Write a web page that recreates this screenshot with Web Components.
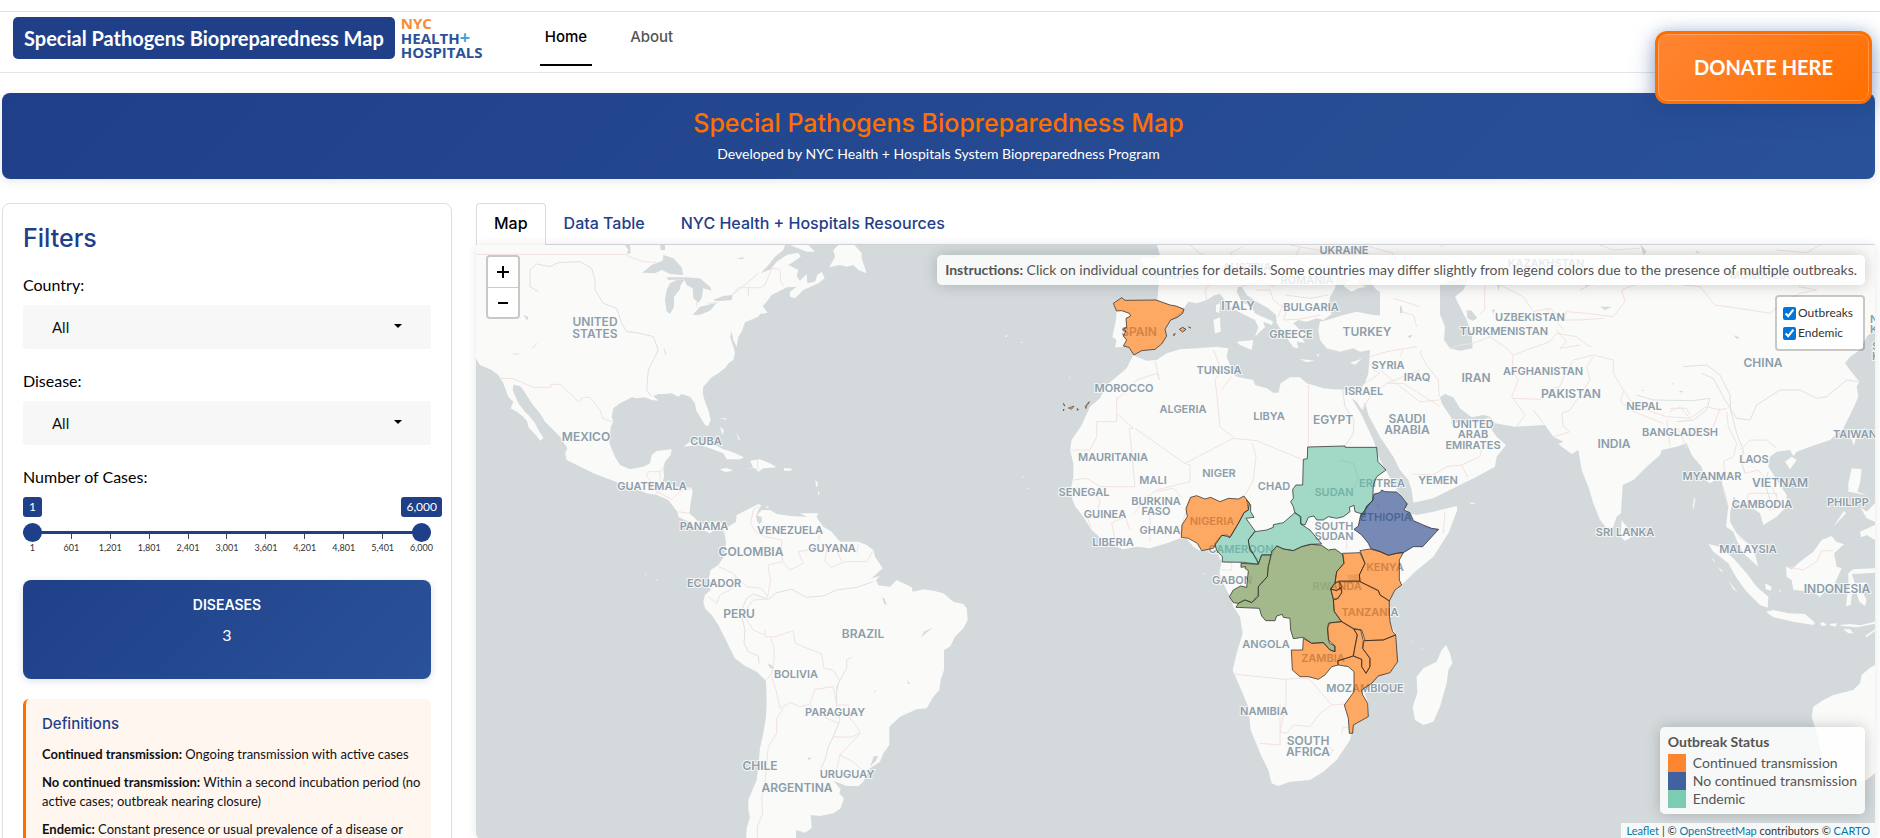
<!DOCTYPE html>
<html lang="en">
<head>
<meta charset="utf-8">
<title>Special Pathogens Biopreparedness Map</title>
<style>
  html { scrollbar-width: none; }
  body {
    margin: 0; background: #fff; color: #111;
    font: 16px/24px Lato, sans-serif;
    --navy: #1f4089; --navy-2: #2a5298; --orange: #ff6f00;
    --display: Inter, sans-serif;
  }
</style>
</head>
<body>
<pathogen-app></pathogen-app>

<template id="t-app">
  <style>
    :host { display: block; padding: 11px 5px 0 0; }
    .body { display: grid; grid-template-columns: 450px minmax(0, 1fr); gap: 24px; align-items: start; padding: 24px 0 0 2px; }
    site-hero { margin: 20px 0 0 2px; }
    site-header { margin-right: -5px; }
  </style>
  <site-header></site-header>
  <site-hero>
    <span slot="title">Special Pathogens Biopreparedness Map</span>
    Developed by NYC Health + Hospitals System Biopreparedness Program
  </site-hero>
  <div class="body">
    <filter-panel></filter-panel>
    <main>
      <tab-bar></tab-bar>
      <outbreak-map></outbreak-map>
    </main>
  </div>
</template>

<template id="t-header">
  <style>
    :host { display: flex; align-items: flex-start; position: relative; height: 60px; border-top: 1px solid #dee2e3; border-bottom: 1px solid #e4e6e8; padding-left: 13px; }
    .brand { background: var(--navy); color: #fff; font-size: 20px; font-weight: 700; line-height: 42px; padding: 0 11px; border-radius: 5px; margin-top: 5px; text-decoration: none; white-space: nowrap; }
    .logo { margin: 4px 0 0 6px; width: 85px; font: 700 15px/14px "Open Sans", sans-serif; color: var(--navy-2); }
    .logo div { white-space: nowrap; }
    .nyc { color: #f68b33; }
    .plus { color: #4aa0d8; font-size: 18px; line-height: 14px; }
    nav { display: flex; gap: 33px; margin-left: 54px; }
    nav a { font: 500 15px/24px var(--display); color: #555; text-decoration: none; padding: 13px 5px 15px; border-bottom: 2px solid transparent; }
    nav a.on { color: #000; border-color: #000; }
    .donate { position: absolute; right: 8px; top: 19px; width: 217px; height: 73px; box-sizing: border-box; border: 3px solid var(--orange); border-radius: 12px;
      background: linear-gradient(135deg, #ff8534, #ff6f00); color: #fff; font: 700 20px/24px Lato, sans-serif; padding: 0 0 2px; cursor: pointer; z-index: 2;
      box-shadow: 0 8px 25px rgba(31,64,137,.4), 0 0 14px rgba(31,64,137,.2), inset 0 0 0 1px rgba(255,255,255,.25); }
  </style>
  <a class="brand" href="#">Special Pathogens Biopreparedness Map</a>
  <div class="logo"><div class="nyc">NYC</div><div>HEALTH<span class="plus">+</span></div><div>HOSPITALS</div></div>
  <nav><a class="on" href="#home">Home</a><a href="#about">About</a></nav>
  <button class="donate" type="button">DONATE HERE</button>
</template>

<template id="t-hero">
  <style>
    :host { display: block; background: linear-gradient(135deg, var(--navy), var(--navy-2)); color: #fff; border-radius: 8px; text-align: center; padding: 14px 0 15px; box-shadow: 0 2px 10px rgba(0,0,0,.1); font-size: 14px; line-height: 20px; }
    h1 { margin: 0 0 5px; font: 500 25px/32px var(--display); color: var(--orange); }
  </style>
  <h1><slot name="title"></slot></h1>
  <slot></slot>
</template>

<template id="t-filters">
  <style>
    :host { display: block; box-sizing: border-box; border: 1px solid #dedede; border-radius: 8px; padding: 19px 20px 20px; background: #fff; }
    h2 { margin: 0 0 20px; font: 500 25px/30px var(--display); color: var(--navy); }
    .card { background: linear-gradient(135deg, var(--navy), var(--navy-2)); color: #fff; border-radius: 8px; text-align: center; height: 99px; box-sizing: border-box; padding-top: 13px; box-shadow: 0 2px 8px rgba(0,0,0,.12); }
    .card h3 { margin: 0 0 6px; font: 600 14px/24px var(--display); }
    .defs { margin: 20px 0 0; background: #fff6f0; border-left: 3px solid var(--orange); border-radius: 6px; padding: 13px 2px 20px 16px; font-size: 13px; line-height: 19px; color: #111; }
    .defs h3 { margin: 0 0 9px; font: 500 15px/24px var(--display); color: var(--navy); }
    .defs p { margin: 0 0 9px; }
  </style>
  <h2>Filters</h2>
  <select-field label="Country:"></select-field>
  <select-field label="Disease:"></select-field>
  <case-slider></case-slider>
  <div class="card"><h3>DISEASES</h3>3</div>
  <section class="defs">
    <h3>Definitions</h3>
    <p><b>Continued transmission:</b> Ongoing transmission with active cases</p>
    <p><b>No continued transmission:</b> Within a second incubation period (no active cases; outbreak nearing closure)</p>
    <p><b>Endemic:</b> Constant presence or usual prevalence of a disease or</p>
  </section>
</template>

<template id="t-select">
  <style>
    :host { display: block; margin-bottom: 20px; }
    label { display: block; line-height: 24px; margin-bottom: 8px; color: #000; }
    .box { position: relative; }
    select { appearance: none; display: block; width: 100%; height: 44px; border: 0; border-radius: 3px; background: #f7f7f7; padding: 0 29px; font: 15px/24px Lato, sans-serif; color: #111; }
    svg { position: absolute; right: 29px; top: 19px; pointer-events: none; }
  </style>
  <label for="s"></label>
  <div class="box"><select id="s"><option>All</option></select><svg width="8" height="4"><path d="M0 0H8L4 4Z"/></svg></div>
</template>

<template id="t-slider">
  <style>
    :host { display: block; margin-bottom: 26px; }
    label.title { display: block; line-height: 24px; margin-bottom: 8px; color: #000; }
    .vals { display: flex; justify-content: space-between; margin-right: -11px; }
    output { background: var(--navy); color: #fff; border-radius: 3px; font-size: 12px; line-height: 20px; padding: 0 5px; min-width: 9px; text-align: center; }
    .track { position: relative; height: 19px; margin-top: 6px; background: linear-gradient(var(--navy), var(--navy)) center / 100% 3px no-repeat; }
    input { appearance: none; position: absolute; inset: 0; width: 100%; height: 19px; margin: 0; background: none; pointer-events: none; }
    input::-webkit-slider-thumb { appearance: none; width: 19px; height: 19px; border-radius: 50%; background: var(--navy); pointer-events: auto; }
    .ticks { display: grid; grid-template-columns: repeat(11, minmax(0, 1fr)); margin: -8px -10px 0; text-align: center; font-size: 9px; line-height: 12px; color: #333; }
    .ticks span::before { content: ""; display: block; width: 1px; height: 5px; margin: 0 auto 3px; background: #444; }
    .ticks span:first-child::before, .ticks span:last-child::before { background: none; }
  </style>
  <label class="title" for="lo">Number of Cases:</label>
  <div class="vals"><output for="lo">1</output><output for="hi">6,000</output></div>
  <div class="track"><input id="lo" type="range" min="1" max="6000" value="1"><input id="hi" type="range" min="1" max="6000" value="6000" aria-label="Maximum number of cases"></div>
  <div class="ticks"><span>1</span><span>601</span><span>1,201</span><span>1,801</span><span>2,401</span><span>3,001</span><span>3,601</span><span>4,201</span><span>4,801</span><span>5,401</span><span>6,000</span></div>
</template>

<template id="t-tabs">
  <style>
    :host { display: flex; border-bottom: 1px solid #d8dce2; height: 41px; }
    a { font: 500 16px/24px var(--display); color: var(--navy); text-decoration: none; padding: 7px 17px 9px; border: 1px solid transparent; border-radius: 4px 4px 0 0; height: 24px; border-bottom: 0; }
    a.on { color: #000; background: #fff; border-color: #d8dce2; padding-bottom: 10px; }
  </style>
  <a class="on" href="#map">Map</a><a href="#table">Data Table</a><a href="#resources">NYC Health + Hospitals Resources</a>
</template>

<template id="t-map">
  <style>
    :host { display: block; position: relative; height: 594px; border-radius: 0 0 6px 6px; overflow: hidden; background: #d4dadc; box-shadow: 0 0 10px rgba(0,0,0,.1); font-size: 12px; }
    svg.world { display: block; width: 100%; height: 100%; }
    .land { fill: #fafaf8; }
    .water { fill: #d4dadc; }
    .bd { fill: none; stroke: #f2e1e1; stroke-width: 3; stroke-linejoin: round; }
    .rv { fill: none; stroke: #dce2e3; stroke-width: 3; stroke-linejoin: round; }
    .hot path { stroke: #222; stroke-opacity: .7; stroke-width: 3; stroke-linejoin: round; fill-opacity: .6; }
    .c { fill: #ff7100; } .n { fill: #1f4089; } .e { fill: #66c2a5; }
    .hot .m { fill: #91ab76; fill-opacity: .84; }
    .hot .islet { stroke-width: 2; }
    text { font: 600 11px Inter, sans-serif; fill: #8c9dab; stroke: #fafaf8; stroke-width: 2px; stroke-opacity: .85; paint-order: stroke; text-anchor: middle; }
    text.l { font-size: 12px; }
    text.s { text-anchor: start; }
    .panel { background: rgba(255,255,255,.8); border-radius: 5px; box-shadow: 0 0 15px rgba(0,0,0,.2); color: #555; }
    .zoom, .layers { border: 2px solid rgba(0,0,0,.2); border-radius: 4px; background: #fff; background-clip: padding-box; }
    .zoom { position: absolute; left: 10px; top: 10px; width: 30px; }
    .zoom button { display: grid; place-items: center; width: 30px; height: 30px; border: 0; padding: 0; background: none; cursor: pointer; }
    .zoom button + button { border-top: 1px solid #ccc; }
    .help { position: absolute; right: 10px; top: 10px; font-size: 14px; line-height: 18px; padding: 6px 8px; }
    .layers { position: absolute; right: 10px; top: 50px; padding: 6px 10px 6px 6px; color: #333; }
    .layers label { display: flex; align-items: center; gap: 2px; line-height: 20px; }
    .layers input { width: 13px; height: 13px; margin: 0; accent-color: #0075db; }
    .legend { position: absolute; right: 10px; bottom: 25px; padding: 6px 8px; font-size: 14px; line-height: 18px; }
    .legend div { display: flex; gap: 7px; }
    .legend i { width: 18px; height: 18px; opacity: .88; }
    .legend b { display: block; margin-bottom: 3px; }
    .c-bg { background: #ff7412; } .n-bg { background: #284c92; } .e-bg { background: #6bc4a8; }
    .credit { position: absolute; right: 0; bottom: 0; background: rgba(255,255,255,.8); font-size: 11px; line-height: 16px; padding: 0 5px; color: #333; }
    .credit a { color: #0078a8; text-decoration: none; }
  </style>
  <svg class="world" viewBox="476 245 1399 594" preserveAspectRatio="xMidYMid slice">
    <!-- North and Central America -->
    <g transform="translate(470 190) scale(.33333)">
      <path class="land" d="M18 150H950L940 180 915 200 895 225 872 250 902 238 920 215 950 195 985 188 992 200 970 215 955 225 985 240 980 258 990 272 1010 252 1012 280 1035 275 1042 255 1055 245 1064 265 1045 280 1000 300 975 325 960 320 960 305 980 290 950 292 935 300 905 315 890 335 878 348 893 368 870 372 865 380 825 397 822 405 815 425 805 440 800 470 790 450 785 425 780 440 790 470 795 490 790 510 775 520 765 535 745 550 725 562 700 590 698 610 705 635 715 660 722 690 715 708 705 705 690 680 678 660 675 640 660 620 635 612 625 620 605 610 585 612 565 612 550 618 565 632 545 630 525 622 500 625 485 622 465 632 450 640 430 655 425 680 430 695 422 710 418 760 435 800 450 825 480 838 520 830 540 820 545 795 560 783 605 778 602 795 585 815 580 835 582 860 578 875 620 890 665 893 668 905 662 935 658 970 680 990 700 1002 740 995 760 1000 778 1010 765 1035 755 1015 735 1018 720 1030 705 1022 680 1012 655 995 625 980 622 965 595 930 560 915 530 910 490 895 450 880 410 865 370 850 340 835 290 810 285 790 292 775 270 740 245 715 225 695 210 670 185 640 160 600 150 588 130 584 128 600 145 640 165 665 180 680 195 700 205 720 215 735 220 745 210 752 200 738 185 722 175 712 172 695 160 680 140 665 122 655 130 635 115 620 100 580 85 555 65 540 30 525 18 505ZM1078 232 1095 200 1090 180 1105 165 1100 150H1140L1175 190 1175 205 1190 250 1165 240 1150 225 1130 230 1110 225ZM1000 150 1035 185 1010 185 960 165ZM640 770 660 755 700 758 735 765 760 778 785 785 822 802 810 808 770 808 760 790 720 775 690 765 655 768ZM818 835 850 833 840 812 870 808 900 820 920 832 880 835 865 845 855 835ZM750 838 770 834 790 842 765 846ZM942 834 968 836 962 842 942 842ZM750 710 762 720 757 735ZM795 720 800 732 812 750 805 748ZM745 683 770 686 768 690ZM1036 870 1042 876 1044 890 1038 888ZM1044 900 1049 912 1044 914Z"/>
      <path class="water" d="M517 248 545 225 578 212 580 195 610 205 635 232 640 255 600 252 575 240 555 250ZM590 365 585 330 590 300 600 280 620 270 645 268 632 285 630 298 612 320 612 350 600 372ZM640 262 690 265 720 290 725 302 700 295 695 325 685 338 670 325 668 295 650 285ZM668 375 690 350 740 338 720 362 690 374ZM728 330 760 318 788 315 785 330 745 334ZM465 165H480L482 190 470 192 475 180ZM570 165H585V180H572ZM160 375 175 380 172 392ZM800 205 822 202 818 208ZM590 262 640 262 640 268 595 270Z"/>
      <path class="rv" d="M205 305 180 290 180 240 200 222 240 230 265 218 330 215 365 235 375 270 375 300 400 340 440 355 455 400 470 425 500 428 550 440 565 480 535 540 530 600 545 620M582 475 588 495M185 475 202 460M130 492H148M865 250 830 280 790 312M835 320V295"/>
      <path class="bd" d="M18 193H465L490 205 520 215 560 217M680 350V330M712 340 742 338M785 315 805 293H870L885 285 905 235 930 238 932 275 942 290M88 565 130 566 190 592H242V583H270L300 610 325 635 340 622H360L390 660 398 685 430 697M583 830 570 845H535L530 860 550 880M570 845V880M555 915 570 895M665 895 630 905 605 928 560 905M625 965 658 970M862 808 864 840"/>
    </g>
    <!-- South America -->
    <g transform="translate(470 500) scale(.33333)">
      <path class="land" d="M765 105 768 130 765 165 745 195 722 210 715 240 722 270 705 285 700 305 705 325 725 345 745 375 765 415 785 455 795 475 825 498 860 515 888 542 890 600 888 650 880 700 870 745 865 800 860 840 835 900 835 930 840 950 830 985 828 1025H978V990L1005 998 1025 985 1022 945 1050 948 1090 940 1112 925 1122 895 1108 880 1112 868 1090 842 1130 858 1165 858 1180 845 1200 805 1230 785 1240 760 1258 735 1258 680 1290 650 1340 628 1370 625 1390 590 1408 570 1412 540 1422 510 1422 450 1440 440 1455 410 1480 385 1493 360 1490 325 1480 312 1450 305 1420 280 1390 272 1360 268 1328 275 1325 262 1280 240 1260 260 1225 256 1218 240 1230 228 1205 235 1238 205 1215 170 1210 150 1190 135 1165 125 1110 125 1085 95 1060 80 1045 60 1040 50 1045 40 990 40 1010 50 960 48 920 42 900 30 875 30 862 45 874 60 868 70 858 50 865 30 874 16 865 12 840 25 800 45 798 65 775 80ZM888 18 897 22 890 25ZM525 222 530 224 526 226ZM558 238 564 240 560 242Z"/>
      <path class="water" d="M860 48 875 50 876 65 868 72 860 62ZM893 490 912 500 910 508 900 503ZM1236 292 1243 295 1250 315 1243 312ZM1353 415 1362 395 1390 382 1368 398ZM1013 772 1026 775 1015 780ZM1200 800 1212 768 1224 768 1218 782ZM1210 580 1222 570 1214 574ZM1312 540 1320 552 1314 552Z"/>
      <path class="rv" d="M815 330 830 295 850 282 895 298 920 278 965 268 1010 292 1060 288 1100 270 1160 262 1210 245M815 350 825 390 822 430 835 455 865 468 867 490M1145 472 1130 480V505L1100 560V620L1110 660 1090 710 1075 740 1065 780 1052 805"/>
      <path class="bd" d="M866 20 850 30 842 70 855 95 885 110 935 120V150L938 185 895 195V210L902 240 892 295M745 200 790 220 830 260 875 265 893 290M715 290 740 310 750 285 780 270 800 250 795 225M892 297 850 300 830 325V360L850 390 885 405V390M883 410H915L970 392 975 430 1055 462 1062 505 1090 510 1108 540 1100 575M902 415 912 440V480L905 520 890 540M905 530 918 570 930 625 960 608 990 620 1020 612 1035 568 1090 560 1100 615 1135 615V650L1160 678 1170 700 1140 712 1088 710M1020 615 1040 640 1105 670M940 625 920 655V700L895 740 885 850 875 890 878 940 862 980V1014M1170 700 1110 765 1095 830M1108 765 1150 785 1175 810M938 185 960 210 1000 190 985 155 1045 145M1045 120 1055 90M1070 150 1065 185 1085 202 1125 185 1190 185 1208 155M1100 150 1115 185M1165 130 1160 160M680 60 690 80M760 85 765 100"/>
    </g>
    <!-- Asia and Oceania -->
    <g transform="translate(1400 340) scale(.33333)">
      <path class="land" d="M-60 -285V30H-90L-95 100-105 130-135 165-130 185-112 210-105 185-95 225-60 290-20 350 0 390 25 420 35 450 40 488 100 475 190 430 230 410 285 380 290 350 318 315 290 290 270 262 268 232 255 238 240 248 200 245 155 250 155 235 125 190 120 172 135 162 160 172 180 205 215 232 250 225 270 230 285 250 345 260 435 255 460 290 490 305 475 312 515 342 535 330 545 390 565 440 580 490 600 540 620 565 640 560 650 530 663 520 668 435 700 420 740 380 780 345 785 330 830 320 860 310 875 345 905 380 915 420 930 430 955 415 965 420 970 450 985 500 978 560 1000 575 1010 600 1030 640 1075 680 1070 660 1060 625 1010 580 990 545 990 520 1000 470 1025 490 1050 500 1080 520 1090 555 1130 530 1160 500 1160 465 1140 435 1105 380 1110 350 1130 335 1170 330 1180 348 1190 335 1230 320 1290 300 1330 265 1355 215 1375 170 1370 140 1378 125 1350 90 1335 70 1350 50 1380 30 1400-10 1425-35V-285Z
      M665 540 680 560 695 590 675 603 662 590ZM925 612 960 620 1000 655 1040 700 1070 740 1105 770 1103 803 1080 795 1040 755 1010 715 985 670 940 635ZM1098 815 1120 810 1165 820 1215 822 1245 848 1240 855 1180 845 1120 832ZM1260 850 1270 846 1280 856 1265 858ZM1288 852 1310 850 1308 860 1290 856ZM1320 855 1350 852 1380 856 1425 845V851L1370 862 1325 858ZM1330 868 1350 868 1360 880 1345 880ZM1395 888 1425 868V872L1400 892ZM1158 680 1175 688 1200 665 1240 635 1265 600 1295 588 1308 605 1332 613 1302 640 1310 680 1325 685 1300 740 1280 750 1260 770 1240 755 1180 750 1175 720 1160 710ZM1345 700 1360 688 1425 685V698L1355 702 1365 730 1400 727 1382 745 1400 780 1395 798 1378 785 1368 755 1355 765 1352 795 1338 798 1345 740ZM1355 385 1385 388 1380 430 1372 455 1400 465 1345 455 1345 430ZM1300 560 1332 512 1338 520ZM1380 575 1425 555V600L1400 585 1383 592ZM1380 500 1400 515 1425 490V545L1400 535ZM1350 285 1372 275 1362 318ZM1155 365 1175 350 1190 360 1170 388ZM882 473 886 478 880 508 878 500ZM1095 730 1115 740 1112 752 1098 748ZM1138 750 1144 752 1140 757ZM935 652 946 665 940 663ZM955 680 970 695 962 693ZM985 722 1012 755 1000 748ZM208 488 228 489 215 492Z
      M1425 975 1408 985 1385 1005 1380 1030 1360 1050 1300 1065 1270 1080 1240 1100 1235 1130 1250 1180 1265 1240 1275 1280V1340L1320 1345 1360 1325 1400 1320 1425 1300Z"/>
      <path class="water" d="M95-150 125-170 170-185 205-182 190-150 165-130 180-100 200-60 215-20 218 25 180 32 150 25 132 0 135-40 115-90ZM200-90 215-88 232-65 218-58 202-65ZM275-90 285-92 280-78ZM600-100 635-100 615-90ZM1000-14 1018-8 1012-2ZM725 148 732 152 726 154ZM838 152 850 154 842 158ZM0-105 10-95 8-80 0-78ZM292-165 300-180 296-145ZM560-170 562-160 556-162ZM720-290 740-265 730-255ZM885-270 900-262 892-260ZM72-10 78 10 72 15ZM815 128 822 132 817 134Z"/>
      <path class="rv" d="M850 80 920 75 960 105 990 165 992 210 1010 280 1030 330 1025 370 1035 400M905 100 940 115 975 180 1010 235 1050 240 1070 195 1140 150 1200 150 1250 175 1280 170 1340 120 1375 125M710 165 760 180 880 182 930 175 920 210 880 240 830 245M540-150 600-180 700-190 800-165M500-235 520-260M430 250 400 210M295-155 305-180 335-200 365-215M1105 395 1095 430 1110 480"/>
      <path class="bd" d="M-60-60-20-50 10-25 60-40 75 10 60 40 80 75 115 120 118 170M118 180 60 185 0 140-60 90M35 402 100 405 140 380 185 375 240 350 245 325M185 375 203 412M150 25 180 15 220 10 270-10 320 25 340 45 335 90 355 120 335 170 375 225 350 260M340 45 380 30 450 5 470-20 530-10 560 15 575 20M340 175 420 178 440 150 480 140 495 100 520 60 580 45M580 50 560 80 570 120 540 165 510 210 485 220 490 260 510 275 480 285 460 290M580 45 640 60 640 100 670 150 690 180 740 210 800 230 870 235 840 200 810 215M670 155 662 185 700 215 790 250M810 205 860 205 870 225M870 235 920 200 960 210 980 205M800 240 805 280 835 265 850 300 860 325M805 280 810 320M960 205 940 260 905 290 890 260 870 290M980 215 985 260 1010 310 1000 350 970 365 975 400M1020 330 1050 300 1100 300 1130 325M1030 380 1035 400 1075 390 1115 440 1130 470M1045 460 1130 460 1130 505 1105 510M970 440 985 500M1045 460 1040 500 1060 510M1160 680 1210 690 1250 665 1265 632H1300M1015 590 1040 610M254-170V-90L240-78M254-170 280-180 310-160 370-130 400-85 450-95 490-60 500-85 560-80 640-70 675-115 665-150M440-95 490-30M480-60 540-60 610-65M470-30 500 5 480 25 540 15M665-150 740-180M850-165 900-160 945-105 1050-90 1110-80 1140-105 1200-140 1250-150 1198-160 1205-185 1260-210M95-260 100-285 130-280M97-265 110-240 230-230M600-285 640-270 720-275M1130-270 1220-262 1260-285 1320-290M0 50 20 5-10-40-60-50"/>
    </g>
    <!-- Africa and Madagascar -->
    <g transform="translate(1000 400) scale(.33333)">
      <path class="land" d="M400-135 380-95 350-70 320-45 300-5 270 20 245 75 215 120 210 150 220 190 220 230 210 280 225 318 250 350 275 390 320 430 370 448 410 440 450 445 500 430 540 415 562 418 580 440 600 452 625 447 650 455 665 485 658 520 670 550 690 590 700 620 720 650 728 700 710 760 698 810 715 850 745 920 752 990 785 1070 805 1110 815 1150 835 1158 870 1145 930 1140 970 1115 1010 1080 1050 1020 1060 975 1105 950 1105 910 1090 870 1135 825 1170 818 1190 790 1187 705 1170 665 1165 605 1185 570 1205 555 1245 515 1300 470 1345 400 1372 330 1370 318 1300 335 1250 345 1225 340 1215 320 1220 305 1200 285 1180 250 1158 212 1140 180 1120 120 1085 45 1055-5 1070 5 1085 28 1095 0 1090-30 1000-32 970-35 920-50 900-68 870-68 842-50 835-22 820-22 800-35 765-45 760-60 710-70 685-85 690-105 680-130 685-155 650-160 590-155 540-152 500-140 470-120 440-118 410-130ZM1338 735 1350 760 1357 790 1345 810 1340 850 1320 920 1300 965 1270 975 1245 960 1238 920 1252 880 1250 830 1270 805 1310 785 1325 750ZM610 518 614 521 610 524ZM66 228 72 231 67 233ZM82 264 90 266 84 268ZM1408 308 1425 309 1415 312ZM1237 722 1240 727 1236 727ZM1266 742 1270 748 1266 748ZM15-192 25-194 18-188ZM60-174 70-172 64-171ZM205-68 213-67 208-65Z"/>
      <path class="rv" d="M1035 138 1060 100 1062 60 1035 20 1028-30M1018 180 1060 190 1075 230 1060 270"/>
      <path class="bd" d="M350 0 410-60 470-80 478-60 465-118M350-10V65H290V110L270 150H210M350 40 400 85H388L405 260H300L260 235 220 240M405 85 555 190 700 115 770 122 905 178M555 190 570 195V245L470 270 430 300 400 345M660 80 650-20 645-60 665-90 640-150M660 80 700 112M695-70 665-30M757 130 768 170 760 240 735 285M925-45V140M570 290 545 380 540 412M470 275 520 265 548 295M510 300 450 330V425M350 440 335 370 375 350 390 390M215 265 260 262 300 300 290 350 260 350 275 385M215 280 250 282M700 822 850 838 905 835 930 838 995 915 1035 912M858 838V910L840 995 860 1000 880 975 930 980 960 940 995 915M840 910V1035L780 1030M1025 1000 1030 980 1048 985M970 1060 985 1040 1000 1050 985 1070ZM665 485 695 488V510H665M1225 340 1260 380 1316 390M1335 335 1330 400M1040 400 1040 450"/>
      <path class="water" d="M1040 525 1080 522 1085 542 1050 545ZM1130 312 1138 315 1134 322Z"/>
    </g>
    <!-- Europe and the Near East -->
    <g transform="translate(940 240) scale(.33333)">
      <path class="land" d="M650 12 660 45 648 55 600 52 612 75 645 90 658 110 652 180 690 195 732 205 745 185 770 190 800 180 825 165 840 162 850 175 870 200 895 215 915 225 945 240 955 262 945 290 960 275 975 262 970 245 995 255 1000 245 970 232 945 220 935 200 905 185 890 155 895 140 905 140 920 165 950 185 985 205 1008 225 1010 250 1030 280 1045 300 1060 322 1075 325 1070 305 1095 308 1080 285 1100 290 1080 270 1060 250 1075 240 1100 245 1130 235 1150 240 1175 222 1165 200 1170 170 1185 145 1190 110 1230 120 1210 138 1235 155 1255 145 1280 140 1250 130 1260 115 1310 105 1290 125 1310 150 1360 175 1385 200 1388 218 1350 228 1300 225 1250 215 1210 225 1170 238 1140 245 1135 270 1140 300 1160 325 1200 335 1240 325 1260 335 1290 330H1500V10ZM530 213 560 215 575 225 560 320 525 322 530 300 517 290 528 240ZM890 305 940 300 935 330 900 315ZM820 240 840 232 842 275 825 280ZM828 195 840 190 838 220 828 215ZM1080 357 1125 362 1100 367ZM1230 368 1265 356 1245 374ZM1130 345 1138 340 1135 350Z"/>
      <path class="land" d="M520 190 545 173 555 181 648 180 690 195 732 208 692 240 675 268 680 288 665 312 645 328 605 332 582 345 567 322 550 318 560 235 530 213ZM718 268 728 262 738 268 728 276Z"/>
      <path class="water" d="M1402 288 1418 284 1410 295Z"/>
      <path class="bd" d="M800 180 795 150 815 130 790 110 830 95 830 60 780 40 750 15M830 95 900 90 960 85 1010 60 1060 65 1080 20M905 140 960 120 1000 140 1020 110 960 85M950 150 990 150 1000 180 1040 210 1030 240 1075 238M1035 165 1110 175 1165 165M1060 65 1110 60 1150 90 1185 110M1015 230 1030 190M1075 238 1140 225M900 90 910 70 870 40 910 20M1050 15 1160 35 1290 20 1360 40 1340 80 1310 105M1360 175 1440 200M1385 215 1420 225 1430 260M1290 350 1340 335 1430 320M1275 430 1320 400 1300 390 1290 370M1340 430 1440 390M1268 510 1290 470 1340 430 1390 430 1500 500"/>
    </g>
    <g id="labels"></g>
    <!-- Countries with a reported status -->
    <g class="hot" transform="translate(940 240) scale(.33333)">
      <path class="c" d="M520 190 545 173 555 181 648 180 690 195 708 198 732 208 728 220 712 232 692 240 675 268 680 288 665 312 645 328 605 332 582 345 567 322 550 318 560 300 550 288 558 272 550 268 560 262 558 235 572 228 568 220 545 212 530 213 526 205ZM718 268 728 262 738 268 728 276Z"/>
      <path class="c islet" d="M745 260 753 264 748 263ZM700 283 706 280 702 288ZM435 500 442 492 438 506ZM442 490 448 485 445 492ZM385 504 402 498 395 508ZM412 505 416 509 411 511ZM370 490 375 497 373 498ZM369 510 372 507 371 513Z"/>
    </g>
    <g class="hot" transform="translate(1000 400) scale(.33333)">
      <path class="e" d="M923 141 1035 138 1036 142H1130L1134 185 1158 210 1130 230 1120 255 1118 300 1095 330V345L1080 340 1065 335 1062 316 1048 322 1050 335 1030 350 1010 355 985 350 970 360 950 360 942 348 925 352 915 375 903 372 900 350 885 340 880 320 872 305 880 295 878 268 888 255H908L910 178 922 176Z"/>
      <path class="e" d="M740 300 752 315V335L762 352 738 355 765 393 745 420 750 450 770 475 775 493 730 487 667 486V470L650 452 645 430 665 405 690 412 715 370 732 338 745 330Z"/>
      <path class="e" d="M765 395 800 390 820 382V374L850 368 885 338 903 350 902 372 930 390 965 432 930 433 905 440 880 452 850 447 830 438 815 465H785L775 490 748 440 745 420Z"/>
      <path class="n" d="M1118 302 1122 282 1140 278 1145 270 1155 275 1190 276 1205 290 1222 312 1212 330 1230 338 1240 362 1270 375 1295 385 1316 388 1268 440H1240L1210 458 1190 460 1165 466 1140 455 1112 445 1105 430 1085 405 1062 388 1075 378 1082 345 1095 330 1100 318Z"/>
      <path class="c" d="M572 292 590 287 615 297 632 292 660 305 685 295 715 297 732 288 748 310 745 330 732 338 715 370 690 412 680 405 665 407 645 435 640 445 605 452 592 430 565 415 544 412 546 375 562 350 558 325Z"/>
      <path class="m" d="M723 490 760 492 775 493 785 465H815L805 500 802 530 775 560V585L755 608 735 600 715 610 700 608 688 590 700 570 722 558 740 562 745 512 735 505 737 500 723 502Z"/>
      <path class="m" d="M815 455 830 438 850 447 880 452 905 440 935 433 965 436 985 450 1005 447 1030 465 1032 490 1010 515 1005 550 992 565 1000 600 1003 635 1025 665 985 670 983 690 988 730 1005 738V755L990 750 970 728 935 730 910 712 880 716 872 690 870 655 850 652 847 643 830 648 825 662H797L785 648 778 625 708 622 715 610 735 600 755 608 775 590V560L802 530 805 500Z"/>
      <path class="c" d="M1027 460 1080 458 1095 490 1078 525 1080 543H1018L1005 548 1010 515 1032 490Z"/>
      <path class="c" d="M1080 452 1110 447 1140 455 1165 466 1190 460 1210 458 1198 480V540L1205 555 1185 570 1168 603 1140 585 1135 572 1080 545 1078 525 1095 490Z"/>
      <path class="c" d="M1018 545H1080L1135 572 1140 585 1168 603V640L1170 665 1178 695 1187 705 1150 720 1095 722 1085 690 1060 685 1025 665 1003 635 1000 600 1015 595 1025 575 1018 560Z"/>
      <path class="c" d="M992 567 1005 550 1018 545 1025 560 1010 572Z"/><path class="c" d="M992 567 1010 572 1025 563V580L1010 597H1000Z"/>
      <path class="c" d="M983 683 990 668 1025 665 1062 688 1072 705 1065 740 1060 768 1013 783 1015 795 995 800 975 825 955 838 925 830H900L877 810 874 750H908L910 715 935 730 970 728 990 750 1005 755V738L985 720Z"/>
      <path class="c" d="M1062 688 1082 690 1090 722 1088 745 1110 775V800L1098 820 1085 800V778L1060 768 1065 740 1072 705Z"/>
      <path class="c" d="M1092 722 1150 720 1187 705 1193 785 1170 818 1135 828 1115 850 1085 870 1088 885 1103 910 1105 950 1060 975 1058 1000H1048L1045 955 1033 915 1062 875V815L1045 800 1015 795 1013 783 1060 768 1085 778V800L1098 820 1110 800V775L1088 745Z"/>
    </g>
  </svg>
  <div class="zoom">
    <button type="button" aria-label="Zoom in"><svg width="12" height="12" stroke="#000" stroke-width="2"><path d="M0 6H12M6 0V12"/></svg></button>
    <button type="button" aria-label="Zoom out"><svg width="12" height="12" stroke="#000" stroke-width="2"><path d="M1 6H11"/></svg></button>
  </div>
  <div class="help panel"><b>Instructions:</b> Click on individual countries for details. Some countries may differ slightly from legend colors due to the presence of multiple outbreaks.</div>
  <div class="layers">
    <label><input type="checkbox" checked>Outbreaks</label>
    <label><input type="checkbox" checked>Endemic</label>
  </div>
  <div class="legend panel"><b>Outbreak Status</b>
    <div><i class="c-bg"></i>Continued transmission</div>
    <div><i class="n-bg"></i>No continued transmission</div>
    <div><i class="e-bg"></i>Endemic</div>
  </div>
  <div class="credit"><a href="https://leafletjs.com">Leaflet</a> | © <a href="https://www.openstreetmap.org/copyright">OpenStreetMap</a> contributors © <a href="https://carto.com">CARTO</a></div>
</template>

<script>
  class Base extends HTMLElement {
    connectedCallback() {
      if (this.shadowRoot) return;
      const root = this.attachShadow({ mode: "open" });
      root.append(document.getElementById(this.constructor.template).content.cloneNode(true));
      this.ready(root);
    }
    ready() {}
  }
  const define = (tag, template, ready) => {
    const C = class extends Base {};
    C.template = template;
    if (ready) C.prototype.ready = ready;
    customElements.define(tag, C);
  };

  // Country names: x, y of the centre of the line, text, optional class
  const LABELS = [
    [595,322,"UNITED","l"],[595,334,"STATES","l"],[586,437,"MEXICO","l"],[706,441,"CUBA"],[652,486,"GUATEMALA"],
    [704,526,"PANAMA"],[790,530,"VENEZUELA"],[751,552,"COLOMBIA","l"],[832,548,"GUYANA"],[714,583,"ECUADOR"],[739,614,"PERU","l"],
    [863,634,"BRAZIL","l"],[796,674,"BOLIVIA"],[835,712,"PARAGUAY"],[760,766,"CHILE","l"],[847,774,"URUGUAY"],[797,788,"ARGENTINA","l"],
    [1344,250,"UKRAINE"],[1247,267,"AUSTRIA"],[1177,275,"FRANCE"],[1307,280,"ROMANIA"],[1238,306,"ITALY","l"],[1311,307,"BULGARIA"],
    [1139,332,"SPAIN","l"],[1291,334,"GREECE"],[1367,332,"TURKEY","l"],[1219,370,"TUNISIA"],[1388,365,"SYRIA"],[1417,377,"IRAQ"],
    [1364,391,"ISRAEL"],[1124,388,"MOROCCO"],[1183,409,"ALGERIA"],[1269,416,"LIBYA"],[1333,420,"EGYPT","l"],
    [1407,419,"SAUDI","l"],[1407,430,"ARABIA","l"],[1113,457,"MAURITANIA"],[1219,473,"NIGER"],[1153,480,"MALI"],[1274,486,"CHAD"],
    [1084,492,"SENEGAL"],[1334,492,"SUDAN"],[1382,483,"ERITREA"],[1156,501,"BURKINA"],[1156,511,"FASO"],[1105,514,"GUINEA"],
    [1160,530,"GHANA"],[1212,521,"NIGERIA"],[1334,526,"SOUTH"],[1334,536,"SUDAN"],[1386,517,"ETHIOPIA"],[1113,542,"LIBERIA"],
    [1438,480,"YEMEN"],[1241,549,"CAMEROON"],[1385,567,"KENYA"],[1232,580,"GABON"],[1337,586,"RWANDA"],[1370,612,"TANZANIA"],
    [1266,644,"ANGOLA"],[1323,658,"ZAMBIA"],[1365,688,"MOZAMBIQUE"],[1264,711,"NAMIBIA"],[1308,741,"SOUTH","l"],[1308,752,"AFRICA","l"],
    [1546,263,"KAZAKHSTAN"],[1530,317,"UZBEKISTAN"],[1504,331,"TURKMENISTAN"],[1760,275,"MONGOLIA"],
    [1870,319,"N","s"],[1870,329,"K","s"],[1872,346,"S","s"],[1872,356,"K","s"],
    [1763,363,"CHINA","l"],[1543,371,"AFGHANISTAN"],[1571,394,"PAKISTAN","l"],[1476,378,"IRAN","l"],[1644,406,"NEPAL"],
    [1680,432,"BANGLADESH"],[1614,444,"INDIA","l"],[1473,424,"UNITED"],[1473,434,"ARAB"],[1473,445,"EMIRATES"],
    [1754,459,"LAOS"],[1712,476,"MYANMAR"],[1780,483,"VIETNAM","l"],[1762,504,"CAMBODIA"],[1833,434,"TAIWAN","s"],[1827,502,"PHILIPP","s"],
    [1625,532,"SRI LANKA"],[1748,549,"MALAYSIA"],[1837,589,"INDONESIA","l"]
  ];

  define("site-header", "t-header");
  define("site-hero", "t-hero");
  define("select-field", "t-select", function (root) {
    root.querySelector("label").textContent = this.getAttribute("label");
  });
  define("case-slider", "t-slider");
  define("filter-panel", "t-filters");
  define("tab-bar", "t-tabs");
  define("outbreak-map", "t-map", root => {
    const g = root.getElementById("labels");
    for (const [x, y, name, cls] of LABELS) {
      const t = document.createElementNS("http://www.w3.org/2000/svg", "text");
      t.setAttribute("x", x);
      t.setAttribute("y", y + 4);
      if (cls) t.setAttribute("class", cls);
      t.textContent = name;
      g.append(t);
    }
  });
  define("pathogen-app", "t-app");
</script>
</body>
</html>
